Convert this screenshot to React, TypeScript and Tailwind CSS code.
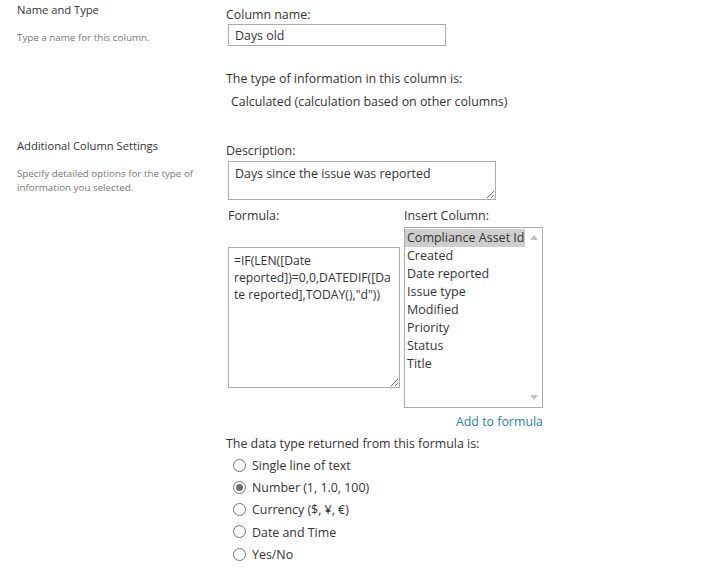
import React from "react";

const columns = ["Compliance Asset Id", "Created", "Date reported", "Issue type", "Modified", "Priority", "Status", "Title"];

const tipos = [
  { rotulo: "Single line of text", marcado: false },
  { rotulo: "Number (1, 1.0, 100)", marcado: true },
  { rotulo: "Currency ($, ¥, €)", marcado: false },
  { rotulo: "Date and Time", marcado: false },
  { rotulo: "Yes/No", marcado: false },
];

function Radio({ marcado }: { marcado: boolean }) {
  return (
    <span className="flex h-[13px] w-[13px] items-center justify-center rounded-full border border-[#707070] bg-white">
      {marcado && <span className="h-[7px] w-[7px] rounded-full bg-[#6f6f6f]" />}
    </span>
  );
}

function Secao({ titulo, descricao, children }: { titulo: string; descricao: React.ReactNode; children: React.ReactNode }) {
  return (
    <div className="flex">
      <div className="w-[226px] shrink-0 pl-[17px] pr-[8px] pt-[2px]">
        <p className="text-[11.2px] leading-[16px] text-[#333]">{titulo}</p>
        <p className="mt-[13px] text-[9.8px] leading-[14px] text-[#777]">{descricao}</p>
      </div>
      <div className="flex-1 pt-[4px]">{children}</div>
    </div>
  );
}

export default function App() {
  const formula = '=IF(LEN([Date\nreported])=0,0,DATEDIF([Da\nte reported],TODAY(),"d"))';

  return (
    <div className="h-[570px] w-[704px] overflow-hidden bg-white font-['Open_Sans',sans-serif] text-[12.4px] text-[#333]">
      {/* Nome e tipo */}
      <Secao titulo="Name and Type" descricao="Type a name for this column.">
        <p className="pt-[2px] leading-[18px]">Column name:</p>
        <div className="ml-[2px] flex h-[22px] w-[218px] items-center border border-[#ababab] px-[6px] pt-[2px] leading-[18px]">Days old</div>
        <p className="mt-[22px] pt-[2px] leading-[18px]">The type of information in this column is:</p>
        <p className="mt-[3px] pl-[5px] pt-[2px] leading-[18px]">Calculated (calculation based on other columns)</p>
      </Secao>

      <div className="h-[25px]" />

      {/* Configurações adicionais */}
      <Secao
        titulo="Additional Column Settings"
        descricao={<>Specify detailed options for the type of information you selected.</>}
      >
        <p className="pt-[2px] leading-[18px]">Description:</p>
        <textarea
          readOnly
          value="Days since the issue was reported"
          className="ml-[2px] mt-[1px] block h-[39px] w-[268px] resize border border-[#ababab] px-[6px] pb-[1px] pt-[3px] leading-[18px] text-[#333] outline-none"
        />

        <div className="ml-[2px] mt-[5px] flex gap-[4px]">
          <div className="w-[172px]">
            <p className="pt-[1px] leading-[19px]">Formula:</p>
            <textarea
              readOnly
              value={formula}
              className="mt-[22px] block h-[141px] w-[172px] resize overflow-hidden whitespace-pre border border-[#ababab] px-[5px] pt-[4px] text-[12.2px] leading-[17px] text-[#333] outline-none"
            />
          </div>
          <div className="w-[139px]">
            <p className="pt-[1px] leading-[19px]">Insert Column:</p>
            <div className="mt-[2px] flex h-[181px] border border-[#ababab]">
              <ul className="flex-1 pt-[1px]">
                {columns.map((c, i) => (
                  <li
                    key={c}
                    className={`whitespace-nowrap pl-[2px] text-[12.5px] leading-[18px] ${i === 0 ? "bg-[#cdcdcd]" : ""}`}
                  >
                    {c}
                  </li>
                ))}
              </ul>
              <div className="flex w-[17px] flex-col items-center justify-between py-[7px]">
                <svg width="8" height="5" viewBox="0 0 8 5"><path d="M0 5 L4 0 L8 5 Z" fill="#c2c2c2" /></svg>
                <svg width="8" height="5" viewBox="0 0 8 5"><path d="M0 0 L4 5 L8 0 Z" fill="#c2c2c2" /></svg>
              </div>
            </div>
            <p className="mt-[3px] pt-[2px] text-right leading-[18px] text-[#1b7fbd]">Add to formula</p>
          </div>
        </div>

        <p className="mt-[2px] pt-[2px] leading-[18px]">The data type returned from this formula is:</p>
        <ul className="mt-[1px] pl-[7px]">
          {tipos.map((t) => (
            <li key={t.rotulo} className="flex h-[22.25px] items-center gap-[6px]">
              <Radio marcado={t.marcado} />
              <span className="pt-[2px]">{t.rotulo}</span>
            </li>
          ))}
        </ul>
      </Secao>
    </div>
  );
}
